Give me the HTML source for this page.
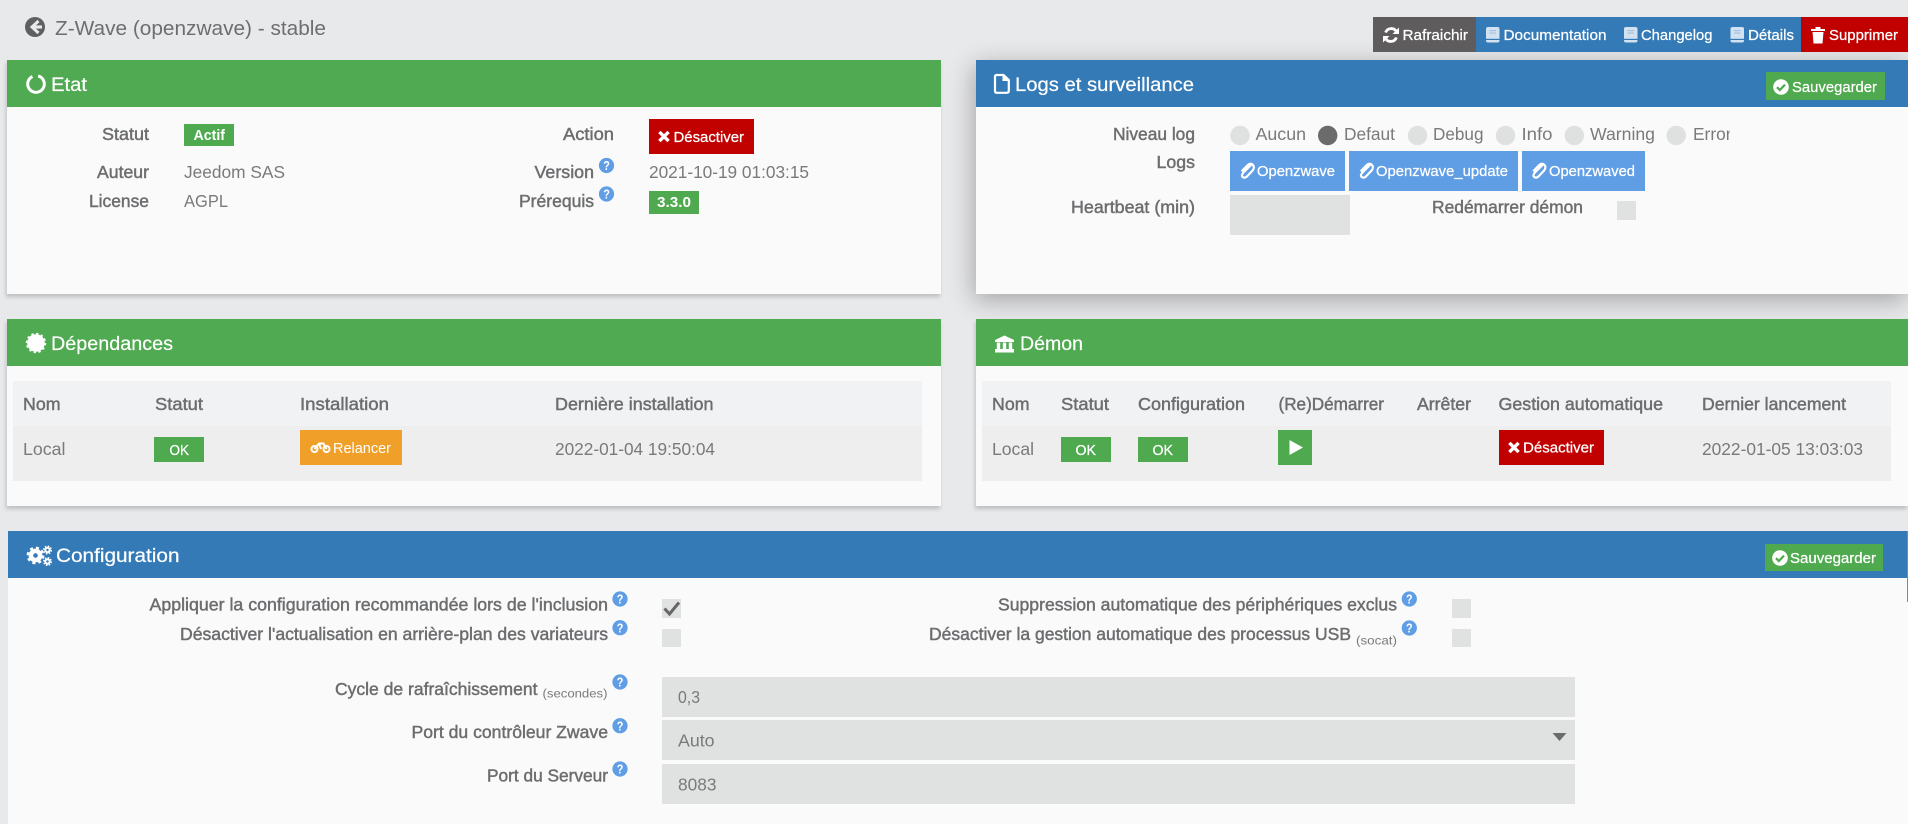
<!DOCTYPE html>
<html lang="fr">
<head>
<meta charset="utf-8">
<title>Z-Wave (openzwave) - stable</title>
<style>
html,body{margin:0;padding:0;width:1908px;height:824px;overflow:hidden;background:#e8e9eb;}
body{position:relative;font-family:"Liberation Sans",sans-serif;}
.b{position:absolute;}
.panel{position:absolute;background:#fafafa;}
.sh{box-shadow:-1px 3px 4px rgba(0,0,0,.18);}
svg{position:absolute;left:0;top:0;}
text{font-family:"Liberation Sans",sans-serif;font-size:17.4px;fill:#7a7a7a;}
.m{fill:#6c6d6f;stroke:#6c6d6f;stroke-width:.45px;}
.t{fill:#fff;font-size:19px;stroke:#fff;stroke-width:.2px;}
.w{fill:#fff;font-size:15px;}
.wb{fill:#fff;font-size:15px;font-weight:bold;}
.wm{fill:#fff;font-size:15px;stroke:#fff;stroke-width:.25px;}
.s{font-size:12.4px;fill:#7a7a7a;}
</style>
</head>
<body>
<div class="panel sh" style="left:7px;top:60px;width:934px;height:234px"></div>
<div class="panel" style="left:976px;top:60px;width:932px;height:234px;box-shadow:-2px 6px 24px rgba(0,0,0,.3)"></div>
<div class="panel sh" style="left:7px;top:319px;width:934px;height:187px"></div>
<div class="panel sh" style="left:976px;top:319px;width:932px;height:187px"></div>
<div class="panel" style="left:8px;top:531px;width:1900px;height:293px"></div>

<div class="b" style="left:7px;top:60px;width:934px;height:47px;background:#50aa51"></div>
<div class="b" style="left:976px;top:60px;width:932px;height:47px;background:#337ab7"></div>
<div class="b" style="left:7px;top:319px;width:934px;height:47px;background:#50aa51"></div>
<div class="b" style="left:976px;top:319px;width:932px;height:47px;background:#50aa51"></div>
<div class="b" style="left:8px;top:531px;width:1900px;height:47px;background:#337ab7"></div>

<div class="b" style="left:13px;top:381px;width:909px;height:45px;background:#f1f2f3"></div>
<div class="b" style="left:13px;top:426px;width:909px;height:55px;background:#eeeeef"></div>
<div class="b" style="left:982px;top:381px;width:909px;height:45px;background:#f1f2f3"></div>
<div class="b" style="left:982px;top:426px;width:909px;height:55px;background:#eeeeef"></div>

<div class="b" style="left:1373px;top:17px;width:103px;height:35px;background:#5e5c5c"></div>
<div class="b" style="left:1476px;top:17px;width:325px;height:35px;background:#337ab7"></div>
<div class="b" style="left:1801px;top:17px;width:107px;height:35px;background:#c10000"></div>
<div class="b" style="left:1766px;top:72px;width:119px;height:28px;background:#4fa94f"></div>
<div class="b" style="left:1765px;top:544px;width:118px;height:27px;background:#4fa94f"></div>

<div class="b" style="left:184px;top:124px;width:50px;height:22px;background:#4fa94f"></div>
<div class="b" style="left:649px;top:119px;width:105px;height:35px;background:#c10000"></div>
<div class="b" style="left:649px;top:191px;width:50px;height:23px;background:#4fa94f"></div>

<div class="b" style="left:1230px;top:151px;width:115px;height:40px;background:#5f9de4"></div>
<div class="b" style="left:1349px;top:151px;width:169px;height:40px;background:#5f9de4"></div>
<div class="b" style="left:1522px;top:151px;width:123px;height:40px;background:#5f9de4"></div>
<div class="b" style="left:1230px;top:195px;width:120px;height:40px;background:#e0e1e1"></div>
<div class="b" style="left:1617px;top:201px;width:19px;height:19px;background:#e0e1e1"></div>

<div class="b" style="left:154px;top:437px;width:50px;height:25px;background:#4fa94f"></div>
<div class="b" style="left:300px;top:430px;width:102px;height:35px;background:#f0a028"></div>
<div class="b" style="left:1061px;top:437px;width:50px;height:25px;background:#4fa94f"></div>
<div class="b" style="left:1138px;top:437px;width:50px;height:25px;background:#4fa94f"></div>
<div class="b" style="left:1278px;top:430px;width:34px;height:35px;background:#4fa94f"></div>
<div class="b" style="left:1499px;top:430px;width:105px;height:35px;background:#c10000"></div>

<div class="b" style="left:662px;top:599px;width:19px;height:19px;background:#e0e1e1"></div>
<div class="b" style="left:662px;top:629px;width:19px;height:18px;background:#e0e1e1"></div>
<div class="b" style="left:1452px;top:599px;width:19px;height:19px;background:#e0e1e1"></div>
<div class="b" style="left:1452px;top:629px;width:19px;height:18px;background:#e0e1e1"></div>
<div class="b" style="left:662px;top:677px;width:913px;height:40px;background:#e0e1e1"></div>
<div class="b" style="left:662px;top:720px;width:913px;height:40px;background:#e0e1e1"></div>
<div class="b" style="left:662px;top:764px;width:913px;height:40px;background:#e0e1e1"></div>
<div class="b" style="left:1907px;top:531px;width:1px;height:71px;background:#888"></div>

<svg width="1908" height="824" viewBox="0 0 1908 824" xmlns="http://www.w3.org/2000/svg">
<defs>
<g id="h"><circle r="7.6" fill="#5f9de4"/><text x="-3.3" y="4.6" textLength="6.6" lengthAdjust="spacingAndGlyphs" style="font-size:12.5px;font-weight:bold;fill:#fff">?</text></g>
<g id="bk"><rect x="0" y="0" width="13.5" height="15.5" rx="2" fill="#d3e2f0"/><rect x="0" y="11.8" width="13.5" height="1.2" fill="#337ab7"/><rect x="3.5" y="3" width="6.5" height="1.2" fill="#a4c1dc"/><rect x="3.5" y="5.5" width="6.5" height="1.2" fill="#a4c1dc"/></g>
<g id="ok"><circle r="7.8" fill="#fff"/><path d="M-4 .2 L-1.2 3 L4 -2.4" fill="none" stroke="#4fa94f" stroke-width="2.2"/></g>
<g id="x"><path d="M-4.6 -4.6 L4.6 4.6 M-4.6 4.6 L4.6 -4.6" stroke="#fff" stroke-width="3.4" fill="none"/></g>
<g id="clip"><path d="M5 -6.5 L-4 2.5 Q-6.3 5.5 -3.8 6.8 Q-1.8 7.8 .3 5.6 L5.8 -.2 Q8 -3.5 5.8 -5.8 Q3.2 -7.8 .6 -5.3 L-5.3 .8" fill="none" stroke="#fff" stroke-width="2.2"/></g>
</defs>

<!-- title -->
<circle cx="35" cy="27" r="10" fill="#5f5f5f"/>
<path d="M38.5 21 L32 27 L38.5 33" fill="none" stroke="#e8e9eb" stroke-width="3"/><rect x="32" y="25.4" width="10" height="3.2" fill="#e8e9eb"/>
<text x="55" y="35" textLength="271" lengthAdjust="spacingAndGlyphs" style="font-size:20px;fill:#6e6e70">Z-Wave (openzwave) - stable</text>

<!-- top buttons -->
<path d="M1396.4 31.5 A6 6 0 0 0 1385.6 32.5 M1385.6 38.5 A6 6 0 0 0 1396.4 37.5" fill="none" stroke="#fff" stroke-width="2.8"/>
<path d="M1399 27.5 V34 H1392.5 Z M1383 42.5 V36 H1389.5 Z" fill="#fff"/>
<text class="wm" x="1402.5" y="40" textLength="65.5" lengthAdjust="spacingAndGlyphs">Rafraichir</text>
<use href="#bk" x="1486" y="27"/>
<text class="wm" x="1503.5" y="40" textLength="103" lengthAdjust="spacingAndGlyphs">Documentation</text>
<use href="#bk" x="1624" y="27"/>
<text class="wm" x="1641" y="40" textLength="71.5" lengthAdjust="spacingAndGlyphs">Changelog</text>
<use href="#bk" x="1730.5" y="27"/>
<text class="wm" x="1748" y="40" textLength="46" lengthAdjust="spacingAndGlyphs">Détails</text>
<path d="M1811 29 H1825 V31 H1811 Z M1815.5 27 H1820.5 V29 H1815.5 Z M1812.5 32 H1823.5 L1822.5 43.5 H1813.5 Z" fill="#fff"/>
<text class="wm" x="1829" y="40" textLength="69" lengthAdjust="spacingAndGlyphs">Supprimer</text>

<!-- Etat -->
<circle cx="36" cy="84" r="8.3" fill="none" stroke="#fff" stroke-width="3" stroke-dasharray="46 6.2" transform="rotate(-75 36 84)"/>
<text class="t" x="51" y="91" textLength="36" lengthAdjust="spacingAndGlyphs">Etat</text>
<text class="m" x="102" y="140" textLength="47" lengthAdjust="spacingAndGlyphs">Statut</text>
<text class="wb" x="193.5" y="140" textLength="31.5" lengthAdjust="spacingAndGlyphs">Actif</text>
<text class="m" x="563" y="140" textLength="51" lengthAdjust="spacingAndGlyphs">Action</text>
<use href="#x" x="664" y="136.5"/>
<text class="wm" x="673.5" y="142" textLength="70.5" lengthAdjust="spacingAndGlyphs">Désactiver</text>
<text class="m" x="97" y="178" textLength="52" lengthAdjust="spacingAndGlyphs">Auteur</text>
<text x="184" y="178" textLength="101" lengthAdjust="spacingAndGlyphs">Jeedom SAS</text>
<text class="m" x="534.5" y="178" textLength="59.5" lengthAdjust="spacingAndGlyphs">Version</text>
<use href="#h" x="606.5" y="165.5"/>
<text x="649" y="178" textLength="160" lengthAdjust="spacingAndGlyphs">2021-10-19 01:03:15</text>
<text class="m" x="89" y="207" textLength="60" lengthAdjust="spacingAndGlyphs">License</text>
<text x="184" y="207" textLength="44" lengthAdjust="spacingAndGlyphs">AGPL</text>
<text class="m" x="519" y="207" textLength="75" lengthAdjust="spacingAndGlyphs">Prérequis</text>
<use href="#h" x="606.5" y="194"/>
<text class="wb" x="657" y="207" textLength="34" lengthAdjust="spacingAndGlyphs">3.3.0</text>

<!-- Logs -->
<path d="M996.5 75 H1003.5 L1008.8 80 V90.8 Q1008.8 92.8 1006.8 92.8 H996.5 Q995 92.8 995 90.8 V77 Q995 75 996.5 75 Z" fill="none" stroke="#fff" stroke-width="2.2"/>
<path d="M1003 75 V80.5 H1008.5" fill="#fff" stroke="#fff" stroke-width="1"/>
<text class="t" x="1015" y="91" textLength="179" lengthAdjust="spacingAndGlyphs">Logs et surveillance</text>
<use href="#ok" x="1781" y="87"/>
<text class="wm" x="1792" y="92" textLength="85" lengthAdjust="spacingAndGlyphs">Sauvegarder</text>
<text class="m" x="1113" y="140" textLength="82" lengthAdjust="spacingAndGlyphs">Niveau log</text>
<circle cx="1240" cy="135.5" r="9.7" fill="#dfe0e0"/>
<text x="1255.5" y="140" textLength="50.5" lengthAdjust="spacingAndGlyphs">Aucun</text>
<circle cx="1327.7" cy="135.5" r="9.7" fill="#6b6b6b"/>
<text x="1344" y="140" textLength="51" lengthAdjust="spacingAndGlyphs">Defaut</text>
<circle cx="1417.5" cy="135.5" r="9.7" fill="#dfe0e0"/>
<text x="1433" y="140" textLength="50.5" lengthAdjust="spacingAndGlyphs">Debug</text>
<circle cx="1505.5" cy="135.5" r="9.7" fill="#dfe0e0"/>
<text x="1521.5" y="140" textLength="31" lengthAdjust="spacingAndGlyphs">Info</text>
<circle cx="1574.3" cy="135.5" r="9.7" fill="#dfe0e0"/>
<text x="1590" y="140" textLength="65" lengthAdjust="spacingAndGlyphs">Warning</text>
<circle cx="1676.2" cy="135.5" r="9.7" fill="#dfe0e0"/>
<svg x="1690" y="120" width="39.6" height="30" viewBox="1690 120 39.6 30"><text x="1693" y="140" textLength="38.5" lengthAdjust="spacingAndGlyphs">Error</text></svg>
<text class="m" x="1156.5" y="168" textLength="38.5" lengthAdjust="spacingAndGlyphs">Logs</text>
<use href="#clip" x="1247" y="170.5"/>
<text class="wm" x="1257" y="176" textLength="78" lengthAdjust="spacingAndGlyphs">Openzwave</text>
<use href="#clip" x="1366" y="170.5"/>
<text class="wm" x="1376" y="176" textLength="132" lengthAdjust="spacingAndGlyphs">Openzwave_update</text>
<use href="#clip" x="1538.5" y="170.5"/>
<text class="wm" x="1549" y="176" textLength="86" lengthAdjust="spacingAndGlyphs">Openzwaved</text>
<text class="m" x="1071" y="213" textLength="124" lengthAdjust="spacingAndGlyphs">Heartbeat (min)</text>
<text class="m" x="1432" y="213" textLength="151" lengthAdjust="spacingAndGlyphs">Redémarrer démon</text>

<!-- Dependances -->
<circle cx="36" cy="343" r="8.8" fill="#fff"/>
<circle cx="36" cy="343" r="9.4" fill="none" stroke="#fff" stroke-width="1.6" stroke-dasharray="2.4 2.5"/>
<text class="t" x="51" y="350" textLength="122" lengthAdjust="spacingAndGlyphs">Dépendances</text>
<text class="m" x="23" y="410" textLength="37.5" lengthAdjust="spacingAndGlyphs">Nom</text>
<text class="m" x="155" y="410" textLength="48" lengthAdjust="spacingAndGlyphs">Statut</text>
<text class="m" x="300" y="410" textLength="89" lengthAdjust="spacingAndGlyphs">Installation</text>
<text class="m" x="555" y="410" textLength="158.5" lengthAdjust="spacingAndGlyphs">Dernière installation</text>
<text x="23" y="455" textLength="42.5" lengthAdjust="spacingAndGlyphs">Local</text>
<text class="wm" x="169.5" y="455" textLength="19.5" lengthAdjust="spacingAndGlyphs">OK</text>
<circle cx="314.5" cy="449" r="3" fill="none" stroke="#fff" stroke-width="2"/><circle cx="326.5" cy="449" r="3" fill="none" stroke="#fff" stroke-width="2"/>
<path d="M314.5 449 L319 443.5 H323.5 L326.5 449 M319 443.5 L321 449" fill="none" stroke="#fff" stroke-width="2"/>
<text class="w" x="333" y="453" textLength="58" lengthAdjust="spacingAndGlyphs">Relancer</text>
<text x="555" y="455" textLength="160" lengthAdjust="spacingAndGlyphs">2022-01-04 19:50:04</text>

<!-- Demon -->
<path d="M1004.5 335.5 L1014 340 V342 H995 V340 Z M995 349 H1014 V352.5 H995 Z M996.8 342.5 H1000.2 V349 H996.8 Z M1002.8 342.5 H1006.2 V349 H1002.8 Z M1008.8 342.5 H1012.2 V349 H1008.8 Z" fill="#fff"/>
<text class="t" x="1020" y="350" textLength="63" lengthAdjust="spacingAndGlyphs">Démon</text>
<text class="m" x="992" y="410" textLength="37.5" lengthAdjust="spacingAndGlyphs">Nom</text>
<text class="m" x="1061" y="410" textLength="48" lengthAdjust="spacingAndGlyphs">Statut</text>
<text class="m" x="1138" y="410" textLength="107" lengthAdjust="spacingAndGlyphs">Configuration</text>
<text class="m" x="1278.5" y="410" textLength="105.5" lengthAdjust="spacingAndGlyphs">(Re)Démarrer</text>
<text class="m" x="1417" y="410" textLength="54" lengthAdjust="spacingAndGlyphs">Arrêter</text>
<text class="m" x="1498.5" y="410" textLength="164.5" lengthAdjust="spacingAndGlyphs">Gestion automatique</text>
<text class="m" x="1702" y="410" textLength="144" lengthAdjust="spacingAndGlyphs">Dernier lancement</text>
<text x="992" y="455" textLength="42" lengthAdjust="spacingAndGlyphs">Local</text>
<text class="wm" x="1075.5" y="455" textLength="20.5" lengthAdjust="spacingAndGlyphs">OK</text>
<text class="wm" x="1152.5" y="455" textLength="20.5" lengthAdjust="spacingAndGlyphs">OK</text>
<path d="M1289.5 440 L1303 447.5 L1289.5 455 Z" fill="#fff"/>
<use href="#x" x="1514" y="447.5"/>
<text class="wm" x="1523" y="452.5" textLength="71" lengthAdjust="spacingAndGlyphs">Désactiver</text>
<text x="1702" y="455" textLength="161" lengthAdjust="spacingAndGlyphs">2022-01-05 13:03:03</text>

<!-- Configuration -->
<circle cx="35.5" cy="555.5" r="4.6" fill="none" stroke="#fff" stroke-width="4.6"/>
<circle cx="35.5" cy="555.5" r="7.6" fill="none" stroke="#fff" stroke-width="2.6" stroke-dasharray="3 3"/>
<circle cx="47.5" cy="550" r="2.2" fill="none" stroke="#fff" stroke-width="2"/>
<circle cx="47.5" cy="561.5" r="2.2" fill="none" stroke="#fff" stroke-width="2"/>
<circle cx="47.5" cy="550" r="3.8" fill="none" stroke="#fff" stroke-width="1.4" stroke-dasharray="1.6 1.4"/>
<circle cx="47.5" cy="561.5" r="3.8" fill="none" stroke="#fff" stroke-width="1.4" stroke-dasharray="1.6 1.4"/>
<text class="t" x="56" y="562" textLength="123.5" lengthAdjust="spacingAndGlyphs">Configuration</text>
<use href="#ok" x="1780" y="558"/>
<text class="wm" x="1790" y="563" textLength="86" lengthAdjust="spacingAndGlyphs">Sauvegarder</text>

<text class="m" x="149.5" y="610.5" textLength="458.5" lengthAdjust="spacingAndGlyphs">Appliquer la configuration recommandée lors de l'inclusion</text>
<use href="#h" x="620" y="599"/>
<path d="M664.5 608.5 L669.5 614 L679 602.5" fill="none" stroke="#666" stroke-width="3"/>
<text class="m" x="180" y="640" textLength="428" lengthAdjust="spacingAndGlyphs">Désactiver l'actualisation en arrière-plan des variateurs</text>
<use href="#h" x="620" y="627.7"/>
<text class="m" x="998" y="610.5" textLength="399" lengthAdjust="spacingAndGlyphs">Suppression automatique des périphériques exclus</text>
<use href="#h" x="1409.3" y="599"/>
<text class="m" x="929" y="640" textLength="422" lengthAdjust="spacingAndGlyphs">Désactiver la gestion automatique des processus USB</text>
<text class="s" x="1356" y="644.5" textLength="41" lengthAdjust="spacingAndGlyphs">(socat)</text>
<use href="#h" x="1409.3" y="628"/>

<text class="m" x="335" y="695" textLength="202.5" lengthAdjust="spacingAndGlyphs">Cycle de rafraîchissement</text>
<text class="s" x="542.5" y="697.5" textLength="65" lengthAdjust="spacingAndGlyphs">(secondes)</text>
<use href="#h" x="620" y="682"/>
<text x="678" y="703" textLength="22" lengthAdjust="spacingAndGlyphs">0,3</text>
<text class="m" x="411.5" y="738" textLength="196.5" lengthAdjust="spacingAndGlyphs">Port du contrôleur Zwave</text>
<use href="#h" x="620" y="725.7"/>
<text x="678" y="746.5" textLength="36.5" lengthAdjust="spacingAndGlyphs">Auto</text>
<path d="M1552.5 733 H1566.5 L1559.5 741 Z" fill="#6b6b6b"/>
<text class="m" x="487" y="781.5" textLength="121" lengthAdjust="spacingAndGlyphs">Port du Serveur</text>
<use href="#h" x="620" y="769"/>
<text x="678" y="790.5" textLength="38.5" lengthAdjust="spacingAndGlyphs">8083</text>
</svg>
</body>
</html>
